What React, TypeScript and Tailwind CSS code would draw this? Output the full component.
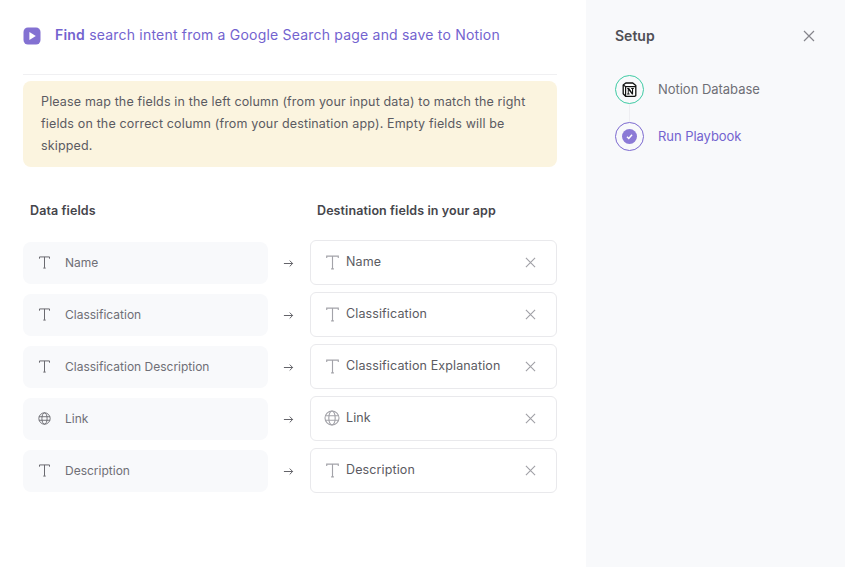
import React from "react";

const TIcon = ({ size, className = "" }: { size: number; className?: string }) => (
  <svg viewBox="0 0 14 14" width={size} height={size} fill="none" stroke="currentColor" strokeWidth="1.05" className={className}>
    <path d="M1.6 2.9V1h10.8v1.9M7 1v11.8M5.7 13h2.6" />
  </svg>
);

const Globe = ({ size, className = "" }: { size: number; className?: string }) => (
  <svg viewBox="0 0 16 16" width={size} height={size} fill="none" stroke="currentColor" strokeWidth="1.1" className={className}>
    <circle cx="8" cy="8" r="7" />
    <ellipse cx="8" cy="8" rx="3.2" ry="7" />
    <path d="M1.3 5.8h13.4M1.3 10.2h13.4" />
  </svg>
);

const Cross = ({ size, className = "" }: { size: number; className?: string }) => (
  <svg viewBox="0 0 12 12" width={size} height={size} fill="none" stroke="currentColor" strokeWidth="1.2" className={className}>
    <path d="M1 1l10 10M11 1L1 11" />
  </svg>
);

const rows = [
  { left: "Name", right: "Name", icon: "t" },
  { left: "Classification", right: "Classification", icon: "t" },
  { left: "Classification Description", right: "Classification Explanation", icon: "t" },
  { left: "Link", right: "Link", icon: "g" },
  { left: "Description", right: "Description", icon: "t" },
];

export default function App() {
  return (
    <div className="flex h-[567px] w-[845px] overflow-hidden bg-white font-['Inter',sans-serif]">
      <main className="w-[586px] shrink-0 pl-[23px] pr-[29px]">
        <div className="flex h-[75px] items-start border-b border-[#f0f0f2] pt-[26px]">
          <svg viewBox="0 0 18 18" width="18" height="18" className="mr-[14px] mt-[1px] shrink-0">
            <rect width="17" height="17" x="0.5" y="0.5" rx="4.5" fill="#8371d2" />
            <path d="M6.4 5v8l6.4-4z" fill="#fff" />
          </svg>
          <p className="text-[14px] leading-[18px] tracking-[0.2px] text-[#7363cf]">
            <span className="font-semibold">Find</span> search intent from a Google Search page and save to Notion
          </p>
        </div>
        <div className="mt-[6px] h-[86px] rounded-lg bg-[#fbf4df] px-[18px] py-[10px] text-[12.5px] leading-[22px] tracking-[0.15px] text-[#5b5b62]">
          Please map the fields in the left column (from your input data) to match the right fields on the correct column (from your destination app). Empty fields will be skipped.
        </div>
        <div className="mt-[36px] flex h-[17px] items-center text-[12.5px] font-semibold tracking-[0.1px] text-[#45454b]">
          <span className="ml-[7px] w-[287px]">Data fields</span>
          <span>Destination fields in your app</span>
        </div>
        <div className="mt-[20px] flex flex-col gap-[7px]">
          {rows.map((r) => (
            <div key={r.left} className="flex h-[45px] items-center">
              <div className="flex h-[42px] w-[245px] items-center rounded-lg bg-[#f8f9fb] pl-[15px] text-[12px] text-[#6f6f76]">
                <span className="flex w-[13px] justify-center">
                  {r.icon === "t" ? <TIcon size={13} className="text-[#66666c]" /> : <Globe size={13} className="text-[#66666c]" />}
                </span>
                <span className="ml-[14px] pt-[1px]">{r.left}</span>
              </div>
              <svg viewBox="0 0 12 12" width="11" height="11" fill="none" stroke="#55555c" strokeWidth="1" className="ml-[15px] mr-[16px] mt-[2px] shrink-0">
                <path d="M1 6h9.5M7.3 2.8L10.5 6l-3.2 3.2" />
              </svg>
              <div className="flex h-[45px] w-[247px] items-center rounded-md border border-[#e9e9ec] pl-[13px] pr-[20px] text-[12.5px] tracking-[0.12px] text-[#5b5b62]">
                <span className="-mt-[1px] flex w-[16px] justify-center">
                  {r.icon === "t" ? <TIcon size={15} className="text-[#a3a3a9]" /> : <Globe size={16} className="text-[#a3a3a9]" />}
                </span>
                <span className="ml-[6px] -mt-[1px] flex-1">{r.right}</span>
                <Cross size={11} className="text-[#a0a0a6]" />
              </div>
            </div>
          ))}
        </div>
      </main>
      <aside className="flex-1 bg-[#f8f9fb] pl-[29px] pr-[30px]">
        <div className="flex h-[71px] items-center justify-between">
          <span className="text-[14px] font-semibold text-[#4f4f55]">Setup</span>
          <Cross size={12} className="text-[#85858b]" />
        </div>
        <div className="mt-[4px] flex flex-col">
          <div className="flex items-center">
            <div className="flex h-[29px] w-[29px] items-center justify-center rounded-full border border-[#3fcba4]">
              <svg viewBox="0 0 15 15" width="15" height="15">
                <path d="M1.2 3L3.8 1h7l3 2.4V13.6l-1 .7H3.6l-2.4-2.6z" fill="#fff" stroke="#111" strokeWidth="1.3" strokeLinejoin="round" />
                <path d="M1.2 3l2.6 1.7h10M3.6 4.7v9.6" fill="none" stroke="#111" strokeWidth="1.2" />
                <path d="M5.2 6h1.9l2.9 4.2V7h-.8v-1h2.6v1h-.7v5.4h-1.1L6.7 8.3V11.4h.9v1H5.1v-1h.7V7h-.6z" fill="#111" />
              </svg>
            </div>
            <span className="ml-[14px] pt-[1px] text-[13px] tracking-[-0.03px] text-[#6f6f76]">Notion Database</span>
          </div>
          <div className="ml-[14px] h-[18px] w-px bg-[#eeeef2]" />
          <div className="flex items-center">
            <div className="flex h-[29px] w-[29px] items-center justify-center rounded-full border border-[#7c69d0]">
              <div className="flex h-[15px] w-[15px] items-center justify-center rounded-full bg-[#8b7ad6]">
                <svg viewBox="0 0 10 10" width="9" height="9" fill="none" stroke="#fff" strokeWidth="1.6">
                  <path d="M2.2 5.2l2 2 3.6-4.2" />
                </svg>
              </div>
            </div>
            <span className="ml-[14px] pt-[1px] text-[13px] tracking-[-0.05px] text-[#7363cf]">Run Playbook</span>
          </div>
        </div>
      </aside>
    </div>
  );
}
